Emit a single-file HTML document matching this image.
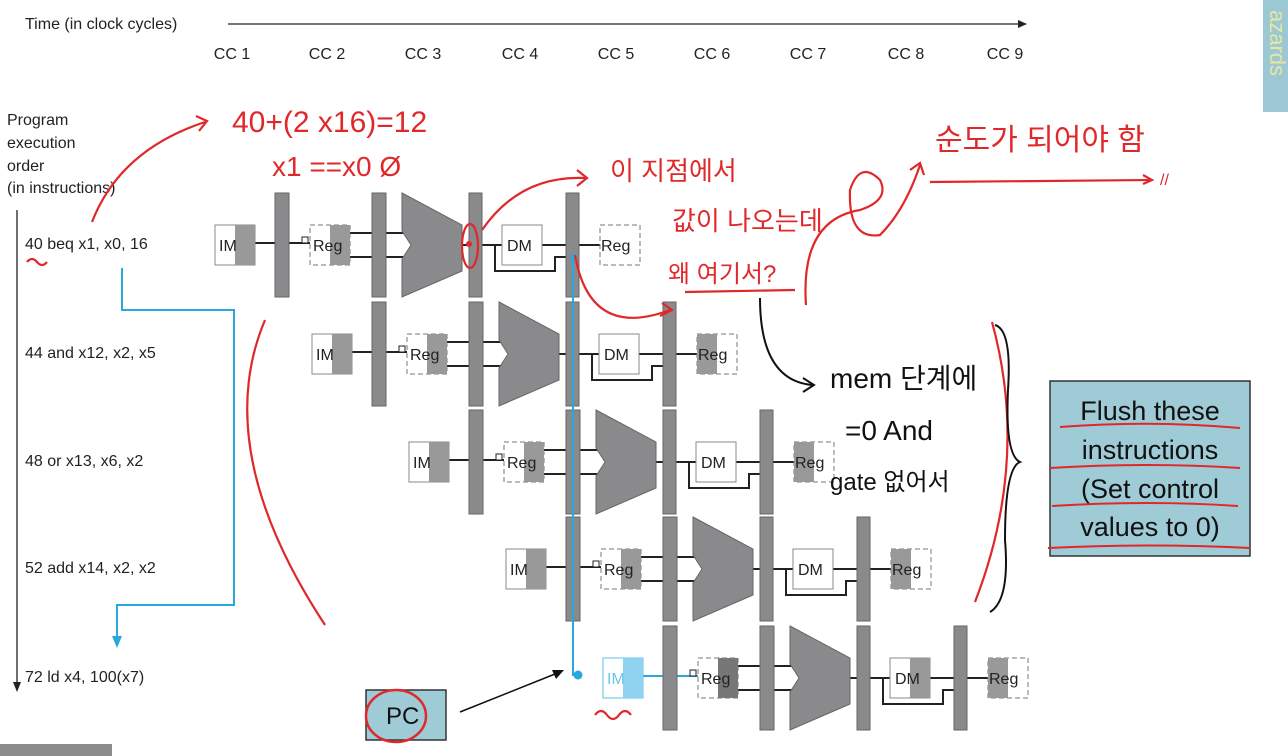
<!DOCTYPE html>
<html><head><meta charset="utf-8"><style>
html,body{margin:0;padding:0;background:#fff;width:1288px;height:756px;overflow:hidden}
svg{display:block}
text{font-family:"Liberation Sans",sans-serif}
.k{font-family:"Liberation Sans","Noto Sans CJK KR",sans-serif}
</style></head><body>
<svg width="1288" height="756" viewBox="0 0 1288 756" xmlns="http://www.w3.org/2000/svg">
<rect x="1263" y="0" width="25" height="112" fill="#9cc8d3"/>
<text transform="translate(1270,10) rotate(90)" font-size="22" fill="#e8e6a0">azards</text>
<rect x="0" y="744" width="112" height="12" fill="#8c8c8c"/>

<text x="25" y="29" font-size="16" fill="#222">Time (in clock cycles)</text>
<line x1="228" y1="24" x2="1020" y2="24" stroke="#222" stroke-width="1.3"/>
<path d="M1018 20 L1027 24 L1018 28 Z" fill="#222"/>
<g font-size="16" fill="#222" text-anchor="middle">
<text x="232" y="59">CC 1</text><text x="327" y="59">CC 2</text><text x="423" y="59">CC 3</text><text x="520" y="59">CC 4</text><text x="616" y="59">CC 5</text><text x="712" y="59">CC 6</text><text x="808" y="59">CC 7</text><text x="906" y="59">CC 8</text><text x="1005" y="59">CC 9</text>
</g>
<g font-size="16" fill="#222">
<text x="7" y="125">Program</text><text x="7" y="148">execution</text><text x="7" y="171">order</text><text x="7" y="193">(in instructions)</text>
<text x="25" y="249">40 beq x1, x0, 16</text>
<text x="25" y="358">44 and x12, x2, x5</text>
<text x="25" y="466">48 or x13, x6, x2</text>
<text x="25" y="573">52 add x14, x2, x2</text>
<text x="25" y="682">72 ld x4, 100(x7)</text>
</g>
<line x1="17" y1="210" x2="17" y2="684" stroke="#222" stroke-width="1.3"/>
<path d="M13 682 L17 692 L21 682 Z" fill="#222"/>

<!-- pipeline rows -->
<g id="r1" transform="translate(215,243)">
<g stroke="#222" stroke-width="2" fill="none">
<line x1="40" y1="0" x2="95" y2="0"/>
<line x1="135" y1="-10" x2="192" y2="-10"/><line x1="135" y1="14" x2="192" y2="14"/>
<line x1="247" y1="2" x2="287" y2="2"/>
<line x1="327" y1="2" x2="385" y2="2"/>
<path d="M280 2 V28 H340 V14 H358"/>
</g>
<rect x="0" y="-18" width="40" height="40" fill="#fff" stroke="#888"/><rect x="20" y="-18" width="20" height="40" fill="#999"/>
<text x="4" y="8" font-size="16" fill="#222">IM</text>
<rect x="60" y="-50" width="14" height="104" fill="#8a8a8c" stroke="#666"/>
<rect x="87" y="-6" width="6" height="6" fill="#fff" stroke="#222"/>
<rect x="95" y="-18" width="40" height="40" fill="#fff" stroke="#777" stroke-dasharray="5,3"/><rect x="115" y="-18" width="20" height="40" fill="#999"/>
<text x="98" y="8" font-size="16" fill="#222">Reg</text>
<rect x="157" y="-50" width="14" height="104" fill="#8a8a8c" stroke="#666"/>
<path d="M187 -50 L247 -18 L247 28 L187 54 L187 16 L196 2 L187 -12 Z" fill="#8a8a8c" stroke="#666"/>
<rect x="254" y="-50" width="13" height="104" fill="#8a8a8c" stroke="#666"/>
<rect x="287" y="-18" width="40" height="40" fill="#fff" stroke="#888"/>
<text x="292" y="8" font-size="16" fill="#222">DM</text>
<rect x="351" y="-50" width="13" height="104" fill="#8a8a8c" stroke="#666"/>
<rect x="385" y="-18" width="40" height="40" fill="#fff" stroke="#777" stroke-dasharray="5,3"/>
<text x="386" y="8" font-size="16" fill="#222">Reg</text>
</g>

<g transform="translate(312,352)">
<g stroke="#222" stroke-width="2" fill="none">
<line x1="40" y1="0" x2="95" y2="0"/>
<line x1="135" y1="-10" x2="192" y2="-10"/><line x1="135" y1="14" x2="192" y2="14"/>
<line x1="247" y1="2" x2="287" y2="2"/><line x1="327" y1="2" x2="385" y2="2"/>
<path d="M280 2 V28 H340 V14 H358"/>
</g>
<rect x="0" y="-18" width="40" height="40" fill="#fff" stroke="#888"/><rect x="20" y="-18" width="20" height="40" fill="#999"/>
<text x="4" y="8" font-size="16" fill="#222">IM</text>
<rect x="60" y="-50" width="14" height="104" fill="#8a8a8c" stroke="#666"/>
<rect x="87" y="-6" width="6" height="6" fill="#fff" stroke="#222"/>
<rect x="95" y="-18" width="40" height="40" fill="#fff" stroke="#777" stroke-dasharray="5,3"/><rect x="115" y="-18" width="20" height="40" fill="#999"/>
<text x="98" y="8" font-size="16" fill="#222">Reg</text>
<rect x="157" y="-50" width="14" height="104" fill="#8a8a8c" stroke="#666"/>
<path d="M187 -50 L247 -18 L247 28 L187 54 L187 16 L196 2 L187 -12 Z" fill="#8a8a8c" stroke="#666"/>
<rect x="254" y="-50" width="13" height="104" fill="#8a8a8c" stroke="#666"/>
<rect x="287" y="-18" width="40" height="40" fill="#fff" stroke="#888"/>
<text x="292" y="8" font-size="16" fill="#222">DM</text>
<rect x="351" y="-50" width="13" height="104" fill="#8a8a8c" stroke="#666"/>
<rect x="385" y="-18" width="40" height="40" fill="#fff" stroke="#777" stroke-dasharray="5,3"/><rect x="385" y="-18" width="20" height="40" fill="#999"/>
<text x="386" y="8" font-size="16" fill="#222">Reg</text>
</g>

<g transform="translate(409,460)">
<g stroke="#222" stroke-width="2" fill="none">
<line x1="40" y1="0" x2="95" y2="0"/>
<line x1="135" y1="-10" x2="192" y2="-10"/><line x1="135" y1="14" x2="192" y2="14"/>
<line x1="247" y1="2" x2="287" y2="2"/><line x1="327" y1="2" x2="385" y2="2"/>
<path d="M280 2 V28 H340 V14 H358"/>
</g>
<rect x="0" y="-18" width="40" height="40" fill="#fff" stroke="#888"/><rect x="20" y="-18" width="20" height="40" fill="#999"/>
<text x="4" y="8" font-size="16" fill="#222">IM</text>
<rect x="60" y="-50" width="14" height="104" fill="#8a8a8c" stroke="#666"/>
<rect x="87" y="-6" width="6" height="6" fill="#fff" stroke="#222"/>
<rect x="95" y="-18" width="40" height="40" fill="#fff" stroke="#777" stroke-dasharray="5,3"/><rect x="115" y="-18" width="20" height="40" fill="#999"/>
<text x="98" y="8" font-size="16" fill="#222">Reg</text>
<rect x="157" y="-50" width="14" height="104" fill="#8a8a8c" stroke="#666"/>
<path d="M187 -50 L247 -18 L247 28 L187 54 L187 16 L196 2 L187 -12 Z" fill="#8a8a8c" stroke="#666"/>
<rect x="254" y="-50" width="13" height="104" fill="#8a8a8c" stroke="#666"/>
<rect x="287" y="-18" width="40" height="40" fill="#fff" stroke="#888"/>
<text x="292" y="8" font-size="16" fill="#222">DM</text>
<rect x="351" y="-50" width="13" height="104" fill="#8a8a8c" stroke="#666"/>
<rect x="385" y="-18" width="40" height="40" fill="#fff" stroke="#777" stroke-dasharray="5,3"/><rect x="385" y="-18" width="20" height="40" fill="#999"/>
<text x="386" y="8" font-size="16" fill="#222">Reg</text>
</g>

<g transform="translate(506,567)">
<g stroke="#222" stroke-width="2" fill="none">
<line x1="40" y1="0" x2="95" y2="0"/>
<line x1="135" y1="-10" x2="192" y2="-10"/><line x1="135" y1="14" x2="192" y2="14"/>
<line x1="247" y1="2" x2="287" y2="2"/><line x1="327" y1="2" x2="385" y2="2"/>
<path d="M280 2 V28 H340 V14 H358"/>
</g>
<rect x="0" y="-18" width="40" height="40" fill="#fff" stroke="#888"/><rect x="20" y="-18" width="20" height="40" fill="#999"/>
<text x="4" y="8" font-size="16" fill="#222">IM</text>
<rect x="60" y="-50" width="14" height="104" fill="#8a8a8c" stroke="#666"/>
<rect x="87" y="-6" width="6" height="6" fill="#fff" stroke="#222"/>
<rect x="95" y="-18" width="40" height="40" fill="#fff" stroke="#777" stroke-dasharray="5,3"/><rect x="115" y="-18" width="20" height="40" fill="#999"/>
<text x="98" y="8" font-size="16" fill="#222">Reg</text>
<rect x="157" y="-50" width="14" height="104" fill="#8a8a8c" stroke="#666"/>
<path d="M187 -50 L247 -18 L247 28 L187 54 L187 16 L196 2 L187 -12 Z" fill="#8a8a8c" stroke="#666"/>
<rect x="254" y="-50" width="13" height="104" fill="#8a8a8c" stroke="#666"/>
<rect x="287" y="-18" width="40" height="40" fill="#fff" stroke="#888"/>
<text x="292" y="8" font-size="16" fill="#222">DM</text>
<rect x="351" y="-50" width="13" height="104" fill="#8a8a8c" stroke="#666"/>
<rect x="385" y="-18" width="40" height="40" fill="#fff" stroke="#777" stroke-dasharray="5,3"/><rect x="385" y="-18" width="20" height="40" fill="#999"/>
<text x="386" y="8" font-size="16" fill="#222">Reg</text>
</g>

<g transform="translate(603,676)">
<g stroke="#222" stroke-width="2" fill="none">
<line x1="135" y1="-10" x2="192" y2="-10"/><line x1="135" y1="14" x2="192" y2="14"/>
<line x1="247" y1="2" x2="287" y2="2"/><line x1="327" y1="2" x2="385" y2="2"/>
<path d="M280 2 V28 H340 V14 H358"/>
</g>
<line x1="40" y1="0" x2="95" y2="0" stroke="#29a8de" stroke-width="2"/>
<rect x="0" y="-18" width="40" height="40" fill="#fff" stroke="#5bc0ea"/><rect x="20" y="-18" width="20" height="40" fill="#8fd3f0"/>
<text x="4" y="8" font-size="16" fill="#6cc3ea">IM</text>
<rect x="60" y="-50" width="14" height="104" fill="#8a8a8c" stroke="#666"/>
<rect x="87" y="-6" width="6" height="6" fill="#fff" stroke="#222"/>
<rect x="95" y="-18" width="40" height="40" fill="#fff" stroke="#777" stroke-dasharray="5,3"/><rect x="115" y="-18" width="20" height="40" fill="#777"/>
<text x="98" y="8" font-size="16" fill="#222">Reg</text>
<rect x="157" y="-50" width="14" height="104" fill="#8a8a8c" stroke="#666"/>
<path d="M187 -50 L247 -18 L247 28 L187 54 L187 16 L196 2 L187 -12 Z" fill="#8a8a8c" stroke="#666"/>
<rect x="254" y="-50" width="13" height="104" fill="#8a8a8c" stroke="#666"/>
<rect x="287" y="-18" width="40" height="40" fill="#fff" stroke="#888"/><rect x="307" y="-18" width="20" height="40" fill="#999"/>
<text x="292" y="8" font-size="16" fill="#222">DM</text>
<rect x="351" y="-50" width="13" height="104" fill="#8a8a8c" stroke="#666"/>
<rect x="385" y="-18" width="40" height="40" fill="#fff" stroke="#777" stroke-dasharray="5,3"/><rect x="385" y="-18" width="20" height="40" fill="#999"/>
<text x="386" y="8" font-size="16" fill="#222">Reg</text>
</g>

<!-- blue lines -->
<g stroke="#29a8de" stroke-width="2" fill="none">
<path d="M122 268 V310 H234 V605 H117 V640"/>
<path d="M573 258 V675 H578"/>
</g>
<path d="M112 636 L117 648 L122 636 Z" fill="#29a8de"/>
<circle cx="578" cy="675" r="4.5" fill="#29a8de"/>
<circle cx="573" cy="257" r="3" fill="#29a8de"/>

<!-- Flush box -->
<rect x="1050" y="381" width="200" height="175" fill="#9ecbd6" stroke="#333" stroke-width="1.5"/>
<g font-size="27" fill="#111" text-anchor="middle">
<text x="1150" y="420">Flush these</text><text x="1150" y="459">instructions</text><text x="1150" y="498">(Set control</text><text x="1150" y="536">values to 0)</text>
</g>
<g stroke="#e0282a" stroke-width="2" fill="none">
<path d="M1060 427 Q1150 420 1240 428"/><path d="M1050 468 Q1150 462 1240 468"/><path d="M1052 506 Q1150 500 1238 506"/><path d="M1048 548 Q1150 543 1250 548"/>
</g>
<!-- PC box -->
<rect x="366" y="690" width="80" height="50" fill="#9ecbd6" stroke="#333" stroke-width="1.5"/>
<text x="386" y="724" font-size="24" fill="#111">PC</text>
<ellipse cx="396" cy="716" rx="30" ry="26" fill="none" stroke="#e0282a" stroke-width="2.5"/>
<path d="M460 712 L560 672" stroke="#111" stroke-width="1.5"/>
<path d="M552 670 L564 670 L556 679 Z" fill="#111"/>

<!-- red annotations -->
<g stroke="#e0282a" stroke-width="2.2" fill="none">
<path d="M92 222 Q120 150 205 122"/><path d="M196 116 L207 121 L199 131"/>
<path d="M27 262 q5 -6 10 0 q5 6 10 0"/>
<ellipse cx="470" cy="246" rx="8" ry="22"/>
<path d="M482 230 Q520 175 585 178"/><path d="M577 170 L587 178 L577 186"/>
<path d="M575 255 Q590 340 670 310"/><path d="M662 303 L672 310 L660 316"/>
<path d="M265 320 Q210 450 325 625"/>
<path d="M806 305 Q800 220 860 210 Q890 200 880 180 Q860 160 850 190 Q848 240 880 235 Q905 210 920 165"/><path d="M910 170 L920 163 L924 175"/>
<path d="M930 182 L1150 180"/><path d="M1143 175 L1152 180 L1143 184"/>
<path d="M685 292 L795 290"/>
<path d="M992 322 Q1030 460 975 602"/>
<path d="M595 715 q6 -8 12 0 q6 8 12 0 q6 -8 12 0"/>
</g>
<circle cx="469" cy="244" r="3" fill="#e0282a"/>
<g class="k" fill="#e0282a" font-size="30">
<text x="232" y="132">40+(2 x16)=12</text>
<text x="272" y="176" font-size="28">x1 ==x0 Ø</text>
<text x="610" y="180" font-size="26">이 지점에서</text>
<text x="672" y="230" font-size="26">값이 나오는데</text>
<text x="668" y="282" font-size="24">왜 여기서?</text>
<text x="935" y="150" font-size="30">순도가 되어야 함</text>
<text x="1160" y="185" font-size="16">//</text>
</g>
<g class="k" fill="#111" font-size="28">
<text x="830" y="388">mem 단계에</text>
<text x="845" y="440">=0 And</text>
<text x="830" y="490" font-size="24">gate 없어서</text>
</g>
<g stroke="#111" stroke-width="2" fill="none">
<path d="M760 298 Q760 380 812 385"/><path d="M803 378 L814 385 L803 392"/>
<path d="M995 325 Q1012 330 1008 390 Q1005 455 1020 462 Q1005 468 1005 540 Q1010 600 990 612"/>
</g>
</svg>
</body></html>
